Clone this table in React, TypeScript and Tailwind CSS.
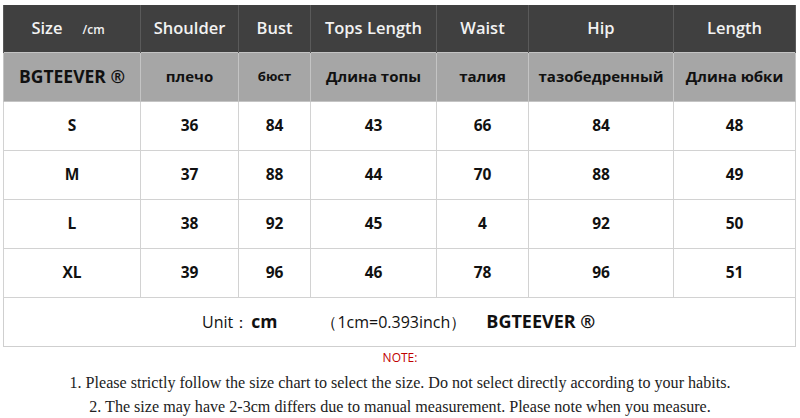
import React from "react";

const widths = [137, 98, 72, 126, 92, 145, 122];
const headers = ["Size", "Shoulder", "Bust", "Tops Length", "Waist", "Hip", "Length"];
const ru = ["BGTEEVER ®", "плечо", "бюст", "Длина топы", "талия", "тазобедренный", "Длина юбки"];
const rows = [
  ["S", "36", "84", "43", "66", "84", "48"],
  ["M", "37", "88", "44", "70", "88", "49"],
  ["L", "38", "92", "45", "4", "92", "50"],
  ["XL", "39", "96", "46", "78", "96", "51"],
];

const sans = { fontFamily: '"Open Sans", "Noto Sans", sans-serif' };

export default function App() {
  return (
    <div className="w-[800px] h-[418px] bg-white overflow-hidden" style={sans}>
      <div className="pt-[5px] pl-[3px]">
        <table className="table-fixed border-collapse w-[792px]">
          <colgroup>
            {widths.map((w, i) => (
              <col key={i} style={{ width: w }} />
            ))}
          </colgroup>
          <tbody>
            <tr className="h-[47px] bg-[#404040]">
              {headers.map((h, i) => (
                <td
                  key={i}
                  className="border-x border-[#5a5a5a] text-center align-middle text-[16.5px] font-semibold text-[#f2f2f2] p-0"
                >
                  {i === 0 ? (
                    <span className="relative left-[-4px]">
                      Size<span className="ml-[20px] text-[12px]">/cm</span>
                    </span>
                  ) : (
                    h
                  )}
                </td>
              ))}
            </tr>
            <tr className="h-[49px] bg-[#a6a6a6]">
              {ru.map((h, i) => (
                <td
                  key={i}
                  className={`border border-[#c4c4c4] text-center align-middle font-bold text-[#111] p-0 ${
                    i === 0 ? "text-[17.5px]" : i === 2 ? "text-[13px]" : "text-[15px]"
                  }`}
                >
                  {h}
                </td>
              ))}
            </tr>
            {rows.map((r, ri) => (
              <tr key={ri} className="h-[49px] bg-white">
                {r.map((c, i) => (
                  <td
                    key={i}
                    className="border border-[#d2d2d2] text-center align-middle font-bold text-[15.5px] text-[#111] p-0"
                  >
                    {c}
                  </td>
                ))}
              </tr>
            ))}
            <tr className="h-[49px] bg-white">
              <td colSpan={7} className="border border-[#cfcfcf] p-0 align-middle">
                <div className="flex items-center text-[#111] pl-[198px] text-[16px]">
                  <span>Unit：</span>
                  <span className="font-bold text-[17.5px] ml-[2px]">cm</span>
                  <span className="ml-[44px]">（1cm=0.393inch）</span>
                  <span className="font-bold text-[18px] ml-[20px]">BGTEEVER ®</span>
                </div>
              </td>
            </tr>
          </tbody>
        </table>
      </div>
      <div className="text-center text-[12px] text-[#c00000] mt-[3px] leading-[16px]">NOTE:</div>
      <div
        className="text-center text-[#222] leading-[24px] mt-[5px]"
        style={{ fontFamily: '"Liberation Serif", "DejaVu Serif", serif' }}
      >
        <div className="text-[16.1px]">1. Please strictly follow the size chart to select the size. Do not select directly according to your habits.</div>
        <div className="text-[16.1px]">2. The size may have 2-3cm differs due to manual measurement. Please note when you measure.</div>
      </div>
    </div>
  );
}
